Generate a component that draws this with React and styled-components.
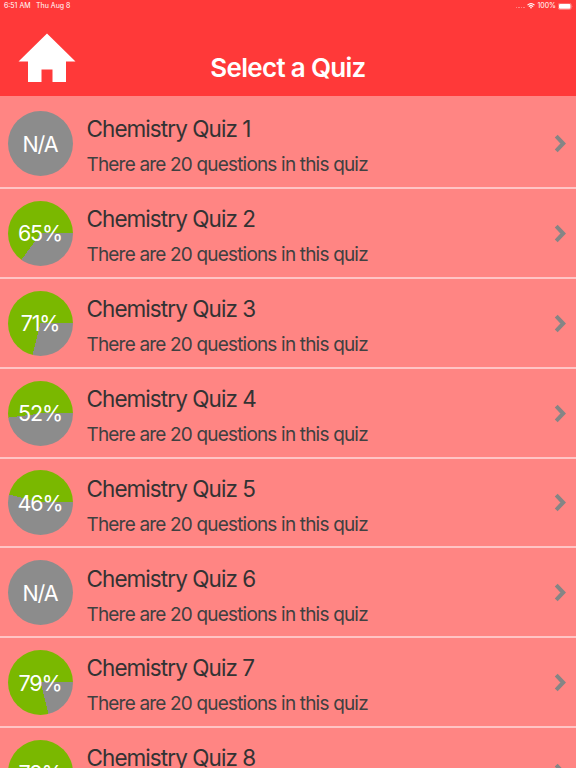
import React from "react"
import styled, { createGlobalStyle } from "styled-components"

const GlobalStyle = createGlobalStyle`
  body {
    margin: 0;
    overflow: hidden;
    font-family: Inter, "Liberation Sans", sans-serif;
  }
`

const Page = styled.div`
  height: 768px;
  width: 100%;
  overflow: hidden;
  background-color: #FF8583;
`

const Header = styled.header`
  display: flex;
  flex-direction: column;
  box-sizing: border-box;
  height: 96px;
  background-color: #FF3939;
  color: white;
`

const StatusBar = styled.div`
  display: flex;
  align-items: center;
  justify-content: space-between;
  height: 12px;
  padding: 0 3px 0 4px;
  font-size: 7px;
  line-height: 12px;
`

const StatusGroup = styled.div`
  display: flex;
  align-items: center;
  gap: ${props => props.$gap};
`

const Dots = styled.span`
  width: 9px;
  height: 1px;
  margin-top: 3px;
  background: repeating-linear-gradient(90deg, #FF8080 0 1.5px, transparent 1.5px 2.5px);
`

const NavBar = styled.div`
  display: grid;
  grid-template-columns: 76px 1fr 76px;
  align-items: start;
  padding-top: 21px;
`

const HomeButton = styled.button`
  display: block;
  padding: 0 0 0 18px;
  border: none;
  background: none;

  svg {
    display: block;
  }
`

const Title = styled.h1`
  margin: 18px 0 0;
  font-size: 26px;
  font-weight: 600;
  line-height: 34px;
  letter-spacing: -0.7px;
  text-align: center;
`

const List = styled.ul`
  margin: 0;
  padding: 3.2px 0 0;
  list-style: none;
`

const Row = styled.li`
  display: flex;
  align-items: center;
  box-sizing: border-box;
  height: 89.85px;
  padding: 0 9px 0 7.5px;
  border-bottom: 2px solid #FFC4C4;

  > svg {
    margin-top: 1px;
  }
`

const Score = styled.div`
  display: flex;
  align-items: center;
  justify-content: center;
  box-sizing: border-box;
  width: 65px;
  height: 65px;
  margin-top: 1px;
  border-radius: 50%;
  background: conic-gradient(from 90deg, #8C8C8C ${props => 100 - props.$score}%, #7AB800 0);
  color: white;
  font-size: 21.5px;
  letter-spacing: -1.1px;
`

const Info = styled.div`
  flex: 1;
  margin-left: 14px;
  padding-top: 6.6px;
`

const Name = styled.div`
  color: #333333;
  font-size: 22.5px;
  line-height: 30px;
  letter-spacing: -0.93px;
`

const Detail = styled.div`
  margin-top: 8px;
  color: #404040;
  font-size: 19px;
  line-height: 26px;
  letter-spacing: -0.82px;
`

const quizzes = [
  { id: 1, score: null },
  { id: 2, score: 65 },
  { id: 3, score: 71 },
  { id: 4, score: 52 },
  { id: 5, score: 46 },
  { id: 6, score: null },
  { id: 7, score: 79 },
  { id: 8, score: 78 },
]

const HomeIcon = () => (
  <svg width="58" height="50" viewBox="0 0 58 50" fill="white">
    <path d="M29 0.5L57.5 28.5H48V49H34.5V36.5H23.5V49H10V28.5H0.5Z" />
  </svg>
)

const WifiIcon = () => (
  <svg width="8" height="6" viewBox="0 0 8 6" fill="none" stroke="white">
    <path d="M0.5 2.1Q4 -0.9 7.5 2.1M1.8 3.6Q4 1.7 6.2 3.6" strokeWidth="1.1" />
    <path d="M2.9 4.5Q4 3.7 5.1 4.5L4 5.8Z" fill="white" stroke="none" />
  </svg>
)

const BatteryIcon = () => (
  <svg width="15" height="7" viewBox="0 0 15 7">
    <rect x="0.3" y="0.3" width="12.9" height="6.2" rx="1.6" fill="none" stroke="#FF9C9C" strokeWidth="0.6" />
    <rect x="1" y="1" width="11.5" height="4.8" rx="1" fill="white" />
    <path d="M13.8 2.4Q15 3.4 13.8 4.4Z" fill="#FF9C9C" />
  </svg>
)

const Chevron = () => (
  <svg width="13" height="19" viewBox="0 0 13 19" fill="none" stroke="#858585" strokeWidth="4">
    <path d="M2.2 2.2L9.2 9.5L2.2 16.8" />
  </svg>
)

const QuizRow = ({ id, score }) => (
  <Row>
    <Score $score={score || 0}>{score === null ? "N/A" : `${score}%`}</Score>
    <Info>
      <Name>Chemistry Quiz {id}</Name>
      <Detail>There are 20 questions in this quiz</Detail>
    </Info>
    <Chevron />
  </Row>
)

const App = () => {
  return (
    <Page>
      <GlobalStyle />
      <Header>
        <StatusBar>
          <StatusGroup $gap="5.5px">
            <span>6:51 AM</span>
            <span>Thu Aug 8</span>
          </StatusGroup>
          <StatusGroup $gap="2px">
            <Dots />
            <WifiIcon />
            <span>100%</span>
            <BatteryIcon />
          </StatusGroup>
        </StatusBar>
        <NavBar>
          <HomeButton aria-label="Home"><HomeIcon /></HomeButton>
          <Title>Select a Quiz</Title>
        </NavBar>
      </Header>
      <List>
        {quizzes.map(quiz => <QuizRow key={quiz.id} {...quiz} />)}
      </List>
    </Page>
  )
}

export default App
